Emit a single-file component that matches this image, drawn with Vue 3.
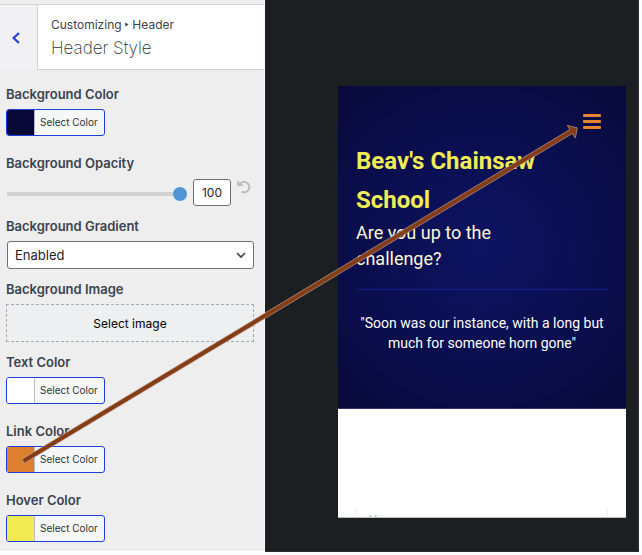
<script setup>
import { ref } from 'vue'

const opacity = ref(100)
const gradient = ref('Enabled')
</script>

<template>
  <div class="app">
    <aside class="sidebar">
      <div class="strip"></div>
      <header class="panel-head">
        <button class="back" type="button" aria-label="Back">
          <svg width="10" height="14" viewBox="0 0 10 14"><path d="M8 2 L2.6 7 L8 12" fill="none" stroke="#2543e0" stroke-width="2.2" /></svg>
        </button>
        <div class="heading">
          <span class="crumbs">Customizing <svg class="tri" width="4" height="5" viewBox="0 0 4 5"><path d="M0.2 0.5 L3.6 2.5 L0.2 4.5Z" fill="#3c434a" /></svg> Header</span>
          <h1>Header Style</h1>
        </div>
      </header>

      <div class="controls">
        <div class="field wide">
          <label for="bg-color">Background Color</label>
          <button id="bg-color" class="color" type="button"><span class="swatch navy"></span><span class="text">Select Color</span></button>
        </div>
        <div class="field">
          <label for="opacity">Background Opacity</label>
          <div class="row">
            <input id="opacity" v-model="opacity" class="slider" type="range" min="0" max="100" />
            <input v-model="opacity" class="number" type="text" aria-label="Opacity value" />
            <button class="reset" type="button" aria-label="Reset">
              <svg width="14" height="14" viewBox="0 0 14 14" fill="none" stroke="#b9bbbd" stroke-width="2"><path d="M2.6 4.6 A5.2 5.2 0 1 1 4.6 11.6" /><path d="M1.2 0.8 V5.2 H5.8" stroke-width="1.8" /></svg>
            </button>
          </div>
        </div>
        <div class="field">
          <label for="gradient">Background Gradient</label>
          <div class="select">
            <select id="gradient" v-model="gradient">
              <option>Enabled</option>
              <option>Disabled</option>
            </select>
            <svg class="chev" width="10" height="7" viewBox="0 0 10 7"><path d="M1 1 L5 5 L9 1" fill="none" stroke="#3c434a" stroke-width="1.6" /></svg>
          </div>
        </div>
        <div class="field">
          <label for="image">Background Image</label>
          <button id="image" class="upload" type="button">Select image</button>
        </div>
        <div class="field wide">
          <label for="text-color">Text Color</label>
          <button id="text-color" class="color" type="button"><span class="swatch white"></span><span class="text">Select Color</span></button>
        </div>
        <div class="field wide">
          <label for="link-color">Link Color</label>
          <button id="link-color" class="color" type="button"><span class="swatch orange"></span><span class="text">Select Color</span></button>
        </div>
        <div class="field wide">
          <label for="hover-color">Hover Color</label>
          <button id="hover-color" class="color" type="button"><span class="swatch yellow"></span><span class="text">Select Color</span></button>
        </div>
      </div>
    </aside>

    <main class="preview">
      <div class="phone">
        <section class="hero">
          <button class="menu" type="button" aria-label="Menu"><i></i><i></i><i></i></button>
          <div class="brand">
            <h2>Beav's Chainsaw School</h2>
            <p>Are you up to the challenge?</p>
          </div>
          <hr />
          <blockquote>"Soon was our instance, with a long but much for someone horn gone"</blockquote>
        </section>
        <section class="form">
          <input type="text" placeholder="Your name" aria-label="Your name" />
        </section>
      </div>
    </main>

    <svg class="arrow" width="642" height="555" viewBox="0 0 642 555" aria-hidden="true">
      <path d="M22 459.2 L569.8 129.6 L567.3 125.4 L577.3 127.8 L575.4 138 L572.3 133.6 L24.4 463.2 Z" fill="#843d16" stroke="#c3a79b" stroke-opacity="0.7" stroke-width="0.9" />
    </svg>
  </div>
</template>

<style>
body {
  margin: 0;
  background: #fff;
}
</style>

<style scoped>
* {
  box-sizing: border-box;
}
.app {
  position: relative;
  display: grid;
  grid-template-columns: 265px 1fr;
  padding: 0 3px 4px 0;
  overflow: hidden;
  font-family: Inter, "Liberation Sans", sans-serif;
}
button {
  padding: 0;
  font-family: inherit;
  cursor: pointer;
}
.sidebar {
  background: #eee;
  border-right: 1px solid #f8f8f8;
  border-bottom: 1px solid #fff;
}
.strip {
  height: 5px;
  border-bottom: 1px solid #d2d3d5;
}
.panel-head {
  display: flex;
  height: 65px;
}
.back {
  display: flex;
  align-items: center;
  width: 37px;
  padding-left: 11px;
  border: 0;
  background: #f1f1f4;
}
.heading {
  flex: 1;
  padding: 11px 13px 0;
  background: #fff;
  border-left: 1px solid #d2d3d5;
  border-bottom: 1px solid #d2d3d5;
}
.crumbs {
  display: block;
  font-size: 12px;
  line-height: 18px;
  color: #3c434a;
}
.tri {
  margin-bottom: 2px;
}
h1 {
  margin: 0;
  font-size: 17px;
  font-weight: 200;
  line-height: 28px;
  color: #2c3338;
}
.controls {
  padding: 14px 10px 9px 6px;
}
.field {
  display: flex;
  flex-direction: column;
  align-items: flex-start;
  gap: 5px;
  margin-bottom: 10px;
}
.wide {
  margin-bottom: 17px;
}
.field:last-child {
  margin-bottom: 0;
}
label {
  font-size: 13px;
  font-weight: 600;
  line-height: 20px;
  color: #3c434f;
}
.color {
  display: flex;
  height: 27px;
  overflow: hidden;
  border: 1px solid #1a3fdc;
  border-radius: 3px;
  background: #f6f7f7;
  font-size: 10px;
  line-height: 25px;
  color: #2c3338;
}
.swatch {
  width: 28px;
  height: 25px;
  border-right: 1px solid #b9bcc4;
}
.text {
  padding: 0 6px 0 5px;
}
.navy {
  background: #080836;
}
.white {
  background: #fff;
}
.orange {
  background: #dc8030;
}
.yellow {
  background: #efeb50;
}
.row {
  display: flex;
  align-items: flex-start;
  width: 100%;
  height: 28px;
}
.slider {
  flex: 1;
  min-width: 0;
  height: 28px;
  margin: 2px 6px 0 1px;
  appearance: none;
  background: transparent;
}
.slider::-webkit-slider-runnable-track {
  height: 4px;
  background: #d2d2d2;
}
.slider::-webkit-slider-thumb {
  appearance: none;
  width: 14px;
  height: 14px;
  margin-top: -5px;
  border-radius: 50%;
  background: #4f94d4;
}
.number {
  width: 38px;
  height: 27px;
  margin-top: 1px;
  padding: 0;
  border: 1px solid #68717c;
  border-radius: 3px;
  background: #fff;
  font: 12px Inter, sans-serif;
  text-align: center;
  color: #1d2327;
}
.reset {
  display: flex;
  width: 23px;
  padding: 2px 0 0 6px;
  border: 0;
  background: none;
}
.select {
  position: relative;
  width: 100%;
  padding-left: 1px;
}
select {
  display: block;
  width: 100%;
  height: 28px;
  padding: 0 7px;
  appearance: none;
  border: 1px solid #68717c;
  border-radius: 3px;
  background: #fff;
  font: 13px Inter, sans-serif;
  color: #1d2327;
}
.chev {
  position: absolute;
  right: 8px;
  top: 11px;
}
.upload {
  width: 100%;
  height: 38px;
  border: 1px dashed #a3abb0;
  background: #edeff0;
  font-size: 12px;
  color: #000;
}
.preview {
  padding: 86px 11px 32px 73px;
  background: #1c1f22;
  border-right: 2px solid #23272d;
  border-bottom: 1px solid #2c2f35;
}
.phone {
  background: #fff;
}
.hero {
  display: flex;
  flex-direction: column;
  height: 323px;
  padding: 28px 18px 0;
  border-bottom: 1px solid #34346a;
  background: radial-gradient(circle at center, #0e1362 0%, #0b0f52 45%, #080a3a 100%);
}
.menu {
  display: flex;
  flex-direction: column;
  align-self: flex-end;
  gap: 3px;
  width: 18px;
  margin-right: 7px;
  border: 0;
  background: none;
}
.menu i {
  height: 3px;
  border-radius: 1px;
  background: #e58530;
}
.brand {
  width: 190px;
  margin-top: 13px;
}
h2 {
  margin: 0;
  font: bold 24px/39px Roboto, "Liberation Sans", sans-serif;
  color: #f0ec55;
}
p {
  margin: 0;
  font: 18px/26px Roboto, sans-serif;
  color: #fbf9d8;
}
hr {
  flex: none;
  width: 100%;
  height: 1px;
  margin: 17px 0 23px;
  border: 0;
  background: #151c90;
}
blockquote {
  margin: 0;
  font: 14px/20px Roboto, sans-serif;
  text-align: center;
  color: #fff;
}
.form {
  height: 109px;
  padding: 100px 18px 0;
  overflow: hidden;
  border-bottom: 1px solid #b9c0c2;
}
.form input {
  display: block;
  width: 100%;
  height: 20px;
  padding: 0 12px;
  border: 1px solid #eee;
  border-top-color: #fff;
  font: 14px/16px "Open Sans", sans-serif;
}
.form input::placeholder {
  color: #b5b5b5;
}
.arrow {
  position: absolute;
  top: 0;
  left: 0;
  pointer-events: none;
}
</style>
